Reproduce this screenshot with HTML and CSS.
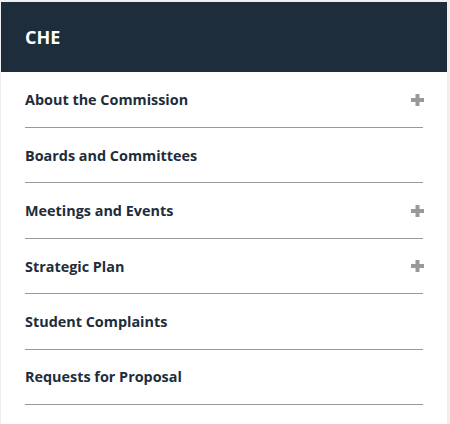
FILE: index.html
```html
<!DOCTYPE html>
<html>
<head>
<meta charset="utf-8">
<link rel="stylesheet" href="styles.css">
</head>
<body>
<div class="panel">
  <div class="header">CHE</div>
  <ul class="menu">
    <li class="item"><span>About the Commission</span><svg class="plus" width="13" height="12" viewBox="0 0 13 12"><rect x="0" y="4" width="13" height="4"/><rect x="4.5" y="0" width="4" height="12"/></svg></li>
    <li class="item"><span>Boards and Committees</span></li>
    <li class="item"><span>Meetings and Events</span><svg class="plus" width="13" height="12" viewBox="0 0 13 12"><rect x="0" y="4" width="13" height="4"/><rect x="4.5" y="0" width="4" height="12"/></svg></li>
    <li class="item"><span>Strategic Plan</span><svg class="plus" width="13" height="12" viewBox="0 0 13 12"><rect x="0" y="4" width="13" height="4"/><rect x="4.5" y="0" width="4" height="12"/></svg></li>
    <li class="item"><span>Student Complaints</span></li>
    <li class="item"><span>Requests for Proposal</span></li>
  </ul>
</div>
</body>
</html>
```
FILE: styles.css
```css
html, body {
  margin: 0;
  height: 100%;
}
body {
  background: #efefef;
  padding: 2px 3px 0 1px;
  box-sizing: border-box;
  font-family: "Open Sans", "Liberation Sans", sans-serif;
}
.panel {
  background: #ffffff;
  height: 100%;
}
.header {
  background: #1e2d3b;
  color: #ffffff;
  height: 70px;
  box-sizing: border-box;
  padding-left: 24px;
  display: flex;
  align-items: center;
  font-weight: 700;
  font-size: 18px;
}
.menu {
  list-style: none;
  margin: 0;
  padding: 0.7px 24px 0;
}
.item {
  display: flex;
  align-items: center;
  justify-content: space-between;
  height: 55.4px;
  box-sizing: border-box;
  border-bottom: 1px solid #999999;
  color: #1e2d3b;
  font-weight: 700;
  font-size: 14.4px;
}
.plus {
  fill: #999999;
  margin-right: -0.5px;
}
```
